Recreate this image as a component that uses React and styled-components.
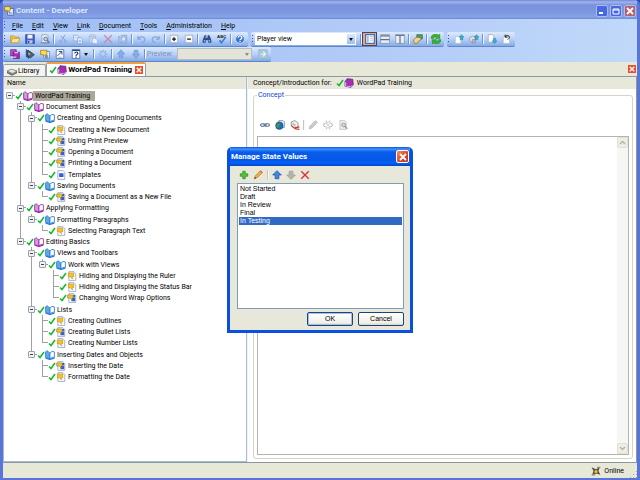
import React, { useState } from 'react';
import styled, { createGlobalStyle, css } from 'styled-components';

const GlobalStyle = createGlobalStyle`
  * {
    box-sizing: border-box;
  }
  body {
    margin: 0;
    background: #1c50b4;
    color: #000;
    font: 7px/10px Roboto, 'Liberation Sans', sans-serif;
  }
  button, input, select, textarea {
    font: inherit;
    color: inherit;
    margin: 0;
  }
  ul {
    margin: 0;
    padding: 0;
    list-style: none;
  }
`;

const page = <path d="M3 1h8l3 3v11H3z" fill="#fff" stroke="#6f86b4" />;

const shapes = {
  app: (
    <>
      <path d="M6 4h9v11H6z" fill="#eef4ff" stroke="#24458c" />
      <path d="M8 11h5M8 13h5" stroke="#3f6fd0" />
      <path d="M1 1h9v6H8l1 4-4-4H1z" fill="#ffe25a" stroke="#7b6a10" />
    </>
  ),
  open: (
    <>
      <path d="M1 14V3h5l2 2h6v3" fill="#f3c64b" stroke="#b98918" />
      <path d="M1 14l3-7h12l-3 7z" fill="#ffe391" stroke="#b98918" />
    </>
  ),
  save: (
    <>
      <path d="M1 1h14v14H1z" fill="#4a5fc4" stroke="#24348c" />
      <path d="M4 1h8v6H4z" fill="#eaf1ff" />
      <path d="M4 10h8v5H4z" fill="#b9c7ee" />
      <path d="M5 11h2v3H5z" fill="#24348c" />
    </>
  ),
  preview: (
    <>
      <path d="M3 1h8l2 2v11H3z" fill="#e4ebf7" stroke="#8090b0" />
      <path d="M1 14h14" stroke="#8090b0" strokeWidth="2" />
      <circle cx="9" cy="8" r="3" fill="#c4d2ea" stroke="#66758f" strokeWidth="1.5" />
      <path d="M11 10l4 4" stroke="#66758f" strokeWidth="2" />
    </>
  ),
  cut: (
    <g fill="none" stroke="#8ba6d6" strokeWidth="1.6">
      <path d="M11 1L6 11M4 3l8 7" />
      <circle cx="4" cy="12" r="2" />
      <circle cx="12" cy="12" r="2" />
    </g>
  ),
  copy: (
    <g fill="#eaf1fd" stroke="#7694cc">
      <path d="M1 2h6l2 2v7H1z" />
      <path d="M7 6h6l2 2v7H7z" />
      <path d="M9 10h4M9 12h4M3 6h3" />
    </g>
  ),
  paste: (
    <g stroke="#98aed6">
      <path d="M2 3h10v11H2z" fill="#c2d2ee" />
      <path d="M5 1h4v3H5z" fill="#e2eafa" />
      <path d="M7 7h6l2 2v6H7z" fill="#eaf1fd" />
    </g>
  ),
  remove: <path d="M2 2l12 12M14 2L2 14" stroke="#c987a8" strokeWidth="2" />,
  camera: (
    <>
      <path d="M1 4h3l2-2h8v12H1z" fill="#b4c6e8" stroke="#7f99cb" />
      <circle cx="9" cy="8" r="3.5" fill="#dde7f8" stroke="#7f99cb" />
      <path d="M3 11l3 3" stroke="#7f99cb" />
    </>
  ),
  undo: <path d="M3 3v5h5M3 8c3-5 11-4 11 1 0 2-2 4-5 4" fill="none" stroke="#88a9dd" strokeWidth="2" />,
  redo: <path d="M13 3v5H8M13 8C10 3 2 4 2 9c0 2 2 4 5 4" fill="none" stroke="#88a9dd" strokeWidth="2" />,
  expand: (
    <>
      <path d="M2 2h12v12H2z" fill="#fafafa" stroke="#8d97a8" />
      <path d="M5 8h6M8 5v6" stroke="#111" strokeWidth="2" />
    </>
  ),
  collapse: (
    <>
      <path d="M2 2h12v12H2z" fill="#fafafa" stroke="#8d97a8" />
      <path d="M5 8h6" stroke="#111" strokeWidth="2" />
    </>
  ),
  find: (
    <>
      <path d="M4 2h3v4h2V2h3l3 8v4h-5v-4H6v4H1v-4z" fill="#2d4b8e" />
      <path d="M3 10h2v2H3zM11 10h2v2h-2zM5 4h1v2H5z" fill="#c9d8f4" />
    </>
  ),
  spell: (
    <>
      <text x="0" y="7" fontSize="7" fontWeight="700" fontFamily="Liberation Sans, sans-serif" fill="#222">
        ABC
      </text>
      <path d="M4 10l3 4 7-9" fill="none" stroke="#3e78c8" strokeWidth="2.5" />
    </>
  ),
  help: (
    <>
      <circle cx="8" cy="8" r="7" fill="#3a72cf" stroke="#e6f0ff" />
      <path d="M5 6c0-4 6-4 6 0 0 2-3 2-3 4M8 11v2" fill="none" stroke="#fff" strokeWidth="2" />
    </>
  ),
  layoutLeft: (
    <>
      <path d="M1 1h14v14H1z" fill="#fff" stroke="#4870bc" strokeWidth="2" />
      <path d="M3 3h3v10H3z" fill="#9bbbe8" />
      <path d="M8 4h5M8 7h5M8 10h5" stroke="#7fa3dc" />
    </>
  ),
  layoutRows: (
    <>
      <path d="M1 1h14v14H1z" fill="#e9eef6" stroke="#7c8798" />
      <path d="M1 3h14M1 9h14" stroke="#5f6f8c" strokeWidth="2" />
    </>
  ),
  layoutColumns: (
    <>
      <path d="M1 1h14v14H1z" fill="#e9eef6" stroke="#7c8798" />
      <path d="M8 2v13M1 2h14" stroke="#6b778c" strokeWidth="2" />
    </>
  ),
  properties: (
    <>
      <path d="M6 1h9v7H6z" fill="#4e9c5e" stroke="#38607a" />
      <path d="M1 9l5-4 6 1 1 3-4 2-2 4H2z" fill="#f2d488" stroke="#8b6418" />
    </>
  ),
  refresh: (
    <g fill="#35b82c" stroke="#14701a" strokeWidth=".7">
      <path d="M0 7c0-7 9-8 12-5l2-2v7H7l2-2C7 4 4 5 4 7z" />
      <path d="M16 9c0 7-9 8-12 5l-2 2V9h7l-2 2c2 1 5 0 5-2z" />
    </g>
  ),
  pageUp: (
    <>
      <path d="M2 4h7l2 2v9H2z" fill="#fff" stroke="#a6b2c6" />
      <path d="M12 1l4 4h-2v4h-4V5H8z" fill="#3baed0" stroke="#1c7899" strokeWidth=".7" />
    </>
  ),
  pagesUp: (
    <>
      <path d="M1 6l5-3 4 3v5l-4 3-5-3z" fill="#e1e4ea" stroke="#848b98" />
      <path d="M5 9h5v5H5z" fill="#b9bec8" stroke="#777f8e" />
      <path d="M12 1l4 4h-2v4h-4V5H8z" fill="#3baed0" stroke="#1c7899" strokeWidth=".7" />
    </>
  ),
  pageDown: (
    <>
      <path d="M2 1h7l2 2v10H2z" fill="#fff" stroke="#8d9ab0" />
      <path d="M12 15l4-4h-2V7h-4v4H8z" fill="#3baed0" stroke="#1c7899" strokeWidth=".7" />
    </>
  ),
  pageUndo: (
    <>
      <path d="M2 4h10v11H2z" fill="#fff" stroke="#a6b2c6" />
      <path d="M5 5c2-5 9-2 6 2L9 9M5 1v4h4" fill="none" stroke="#222" strokeWidth="1.6" />
    </>
  ),
  newBook: (
    <>
      <path d="M1 1h9v10H1z" fill="#c04fce" stroke="#5a1169" />
      <path d="M5 5h10v10H5z" fill="#a32fb4" stroke="#4b0c58" />
      <path d="M7 6h6M2 13h8" stroke="#fff" strokeWidth="1.5" />
    </>
  ),
  newSection: (
    <>
      <path d="M2 1l8 5-4 9-4-3z" fill="#2b5fc4" stroke="#10306e" />
      <path d="M5 2l10 7-6 5-5-3z" fill="#4c6478" stroke="#1b2a38" />
      <path d="M5 5l4 3-3 2z" fill="#f2c230" />
    </>
  ),
  newTopic: (
    <>
      <path d="M6 4h9v11H6z" fill="#f6f9ff" stroke="#3560ac" />
      <path d="M8 11h5M8 13h5" stroke="#3560ac" strokeWidth="1.5" />
      <path d="M1 2h10v7H9l1 4-5-4H1z" fill="#f7dc58" stroke="#8a6a10" />
    </>
  ),
  linkPage: (
    <>
      <path d="M2 1h12v14H2z" fill="#fff" stroke="#24458c" />
      <path d="M4 11l7-7M11 4v5M11 4H6" stroke="#24458c" strokeWidth="1.5" />
      <path d="M5 13h6" stroke="#7a94cc" />
    </>
  ),
  questionPage: (
    <>
      <path d="M2 1h12v14H2z" fill="#fff" stroke="#24458c" />
      <path d="M2 2h12" stroke="#24458c" strokeWidth="2" />
      <path d="M6 7c0-3 5-3 5 0 0 2-3 2-3 4M8 12v2" fill="none" stroke="#1b2e66" strokeWidth="1.8" />
    </>
  ),
  star: <path d="M8 1v4M8 11v4M1 8h4M11 8h4M3 3l3 3M10 10l3 3M13 3l-3 3M6 10l-3 3" stroke="#8baee2" strokeWidth="2" />,
  upFaded: <path d="M8 1l6 7h-3v6H5V8H2z" fill="#86ace6" stroke="#6c95d8" />,
  downFaded: <path d="M8 15l6-7h-3V2H5v6H2z" fill="#86ace6" stroke="#6c95d8" />,
  go: (
    <>
      <path d="M1 1h14v14H1z" fill="#a8c5d8" stroke="#9ab6d0" />
      <path d="M4 8h7M8 4l4 4-4 4" fill="none" stroke="#e4eef4" strokeWidth="2" />
    </>
  ),
  library: (
    <>
      <path d="M0 8l7-3 9 3-7 4z" fill="#e8e8e8" stroke="#555" />
      <path d="M0 9v2l8 4 8-4V9l-7 4z" fill="#777" stroke="#444" strokeWidth=".6" />
    </>
  ),
  check: <path d="M2 9l4 4 8-11" fill="none" stroke="#12b82c" strokeWidth="3" />,
  book: (
    <>
      <path d="M2 5l3-4 9 1 1 9-4 4-9-2z" fill="#a32fb4" stroke="#560e66" />
      <path d="M1 6l3 1-1 7-2-1z" fill="#e9c8ee" stroke="#7a3a88" strokeWidth=".6" />
      <path d="M4 13l7 1 3-3" stroke="#fff" fill="none" />
    </>
  ),
  openBook: (
    <g fill="#fff" stroke="#9a2ea8" strokeWidth="1.4">
      <path d="M8 5L3 1 1 3v9l7 3z" fill="#d49adb" />
      <path d="M8 5c2-3 4-3 7-2v9c-3-1-5 0-7 3z" />
      <path d="M1 13l7 2 7-2" fill="none" strokeWidth="2" />
    </g>
  ),
  openSection: (
    <g fill="#fff" stroke="#2a7fd0" strokeWidth="1.4">
      <path d="M8 5L3 1 1 3v9l7 3z" fill="#5fa8ee" />
      <path d="M8 5c2-3 4-3 7-2v9c-3-1-5 0-7 3z" />
      <path d="M1 13l7 2 7-2" fill="none" strokeWidth="2" />
    </g>
  ),
  topic: (
    <>
      {page}
      <path d="M2 3h9v6H8l1 4-4-4H2z" fill="#f2c230" stroke="#b8860f" strokeWidth=".8" />
    </>
  ),
  recorded: (
    <>
      {page}
      <path d="M9 3h4v4H9zM7 8h6v5H7z" fill="#2f5fd8" />
      <path d="M1 3h9v5H8l1 4-4-4H1z" fill="#f2c230" stroke="#8f6a14" strokeWidth=".8" />
    </>
  ),
  template: (
    <>
      {page}
      <path d="M5 5h7v6H5z" fill="#2f5fd8" />
    </>
  ),
  link: (
    <g fill="none" stroke="#5c7290" strokeWidth="1.8">
      <rect x="1" y="6" width="7" height="4" rx="2" />
      <rect x="8" y="6" width="7" height="4" rx="2" />
      <path d="M5 8h6" />
    </g>
  ),
  webLink: (
    <>
      <path d="M6 1h7l2 2v9H6z" fill="#eaf1fc" stroke="#4b69a4" />
      <circle cx="7" cy="9" r="6" fill="#226cc0" stroke="#164a70" />
      <path d="M3 6l4-1 2 3-3 2-1 4-3-4z" fill="#3c9a4a" />
    </>
  ),
  removeLink: (
    <>
      <path d="M2 3l6-2 5 4v6l-6 2-5-4z" fill="#f2f2f2" stroke="#666" />
      <path d="M4 5l5 3M4 7l5 3" stroke="#888" />
      <path d="M2 9l5 4 8-2M8 14l7 1" fill="none" stroke="#d0341c" strokeWidth="2" />
    </>
  ),
  pencilFaded: <path d="M2 14l1-4 9-9 3 3-9 9z" fill="#ccc" stroke="#aaa" />,
  unlinkFaded: (
    <path
      d="M7 5H4a3 3 0 0 0 0 6h2M10 5h2a3 3 0 0 1 0 6H9M5 1l2 3M11 1L9 4M5 15l2-3M11 15l-2-3M6 8h4"
      fill="none"
      stroke="#b4b4b4"
      strokeWidth="1.6"
    />
  ),
  searchFaded: (
    <>
      <path d="M3 1h8l2 2v12H3z" fill="#eee" stroke="#b0b0b0" />
      <circle cx="9" cy="8" r="3" fill="#ddd" stroke="#999" strokeWidth="1.5" />
      <path d="M11 10l4 4" stroke="#999" strokeWidth="2" />
    </>
  ),
  add: <path d="M6 2h4v4h4v4h-4v4H6v-4H2V6h4z" fill="#4cc83c" stroke="#1d7c18" />,
  edit: (
    <>
      <path d="M2 14l2-5 8-8 3 3-8 8z" fill="#f0b43c" stroke="#a56a12" />
      <path d="M11 2l2-1 2 2-1 2z" fill="#d8607a" />
      <path d="M2 14l1-3 2 2z" fill="#333" />
    </>
  ),
  up: <path d="M8 1l7 7h-4v6H5V8H1z" fill="#3f86ea" stroke="#16419c" />,
  down: <path d="M8 15l7-7h-4V2H5v6H1z" fill="#b4b4ac" stroke="#96968e" />,
  cross: <path d="M2 2l12 12M14 2L2 14" stroke="#dc2f3c" strokeWidth="2.2" />,
  online: (
    <>
      <path d="M1 2l7 3 6-3-2 6 3 6-7-2-6 2 2-6z" fill="#4a5058" />
      <circle cx="8" cy="9" r="3" fill="#f0c020" stroke="#806000" />
      <path d="M1 13h6v2H1zM10 1h5v2h-5z" fill="#888" />
    </>
  ),
};

const Svg = styled.svg`
  display: block;
  flex: none;
`;

const Icon = ({ name, size = 10 }) => (
  <Svg width={size} height={size} viewBox="0 0 16 16" aria-hidden="true">
    {shapes[name]}
  </Svg>
);

const Window = styled.div`
  display: flex;
  flex-direction: column;
  min-height: 100vh;
  border: solid #5a74d8;
  border-width: 0 3px 2px;
  border-radius: 5px 5px 0 0;
  background: #e8e8d9;
  overflow: hidden;
`;

const TitleBar = styled.header`
  display: flex;
  align-items: center;
  gap: 2px;
  height: 19px;
  padding: 2px 0 0 1px;
  background: linear-gradient(#6f86d8, #9fb5ec 2px, #7b92dc 5px, #7e98e0 13px, #86a4e8 17px, #6c86d6);
`;

const WindowTitle = styled.h1`
  flex: 1;
  margin: 0;
  color: #dbe6fb;
  font: bold 8px/12px Roboto, sans-serif;
`;

const CaptionButton = styled.button`
  display: flex;
  align-items: center;
  justify-content: center;
  width: 12px;
  height: 12px;
  padding: 0;
  border: 1px solid #a9bcf0;
  border-radius: 2px;
  color: #fff;
  background: ${({ $close }) => ($close ? '#b4606e' : '#4668e0')};
`;

const CaptionButtons = styled.div`
  display: flex;
  gap: 2px;
  padding-right: 1px;
`;

const Bars = styled.div`
  background: linear-gradient(to right, #9ebef5, #b3cbf7 60%, #c0d9f9);
`;

const MenuBar = styled.nav`
  display: flex;
  align-items: center;
  height: 13px;
`;

const Grip = styled.span`
  flex: none;
  width: 2px;
  height: 9px;
  margin: 0 1px;
  background: repeating-linear-gradient(#3d5c9f 0 1px, transparent 1px 3px) 0 0 / 1px 100% no-repeat;
`;

const MenuItem = styled.button`
  padding: 0;
  margin: 0 4px 0 5px;
  border: 0;
  background: none;

  &::first-letter {
    text-decoration: underline;
  }
`;

const ToolbarRow = styled.div`
  display: flex;
  gap: 3px;
  height: 15px;
`;

const Toolbar = styled.div`
  display: flex;
  align-items: center;
  height: 15px;
  padding-right: 1px;
  border-bottom: 1px solid #5f86c8;
  border-radius: 2px;
  background: linear-gradient(#dceafe, #b8d1f8 50%, #83abe6);
`;

const ToolButton = styled.button`
  display: flex;
  align-items: center;
  justify-content: center;
  gap: 3px;
  width: ${({ $wide }) => ($wide ? '25px' : '15px')};
  height: 14px;
  padding: 0;
  border: 1px solid transparent;
  background: none;

  ${({ $active }) =>
    $active &&
    css`
      border-color: #2c4a94;
      background: #f5a45a;
    `}
`;

const Divider = styled.span`
  flex: none;
  width: 1px;
  height: 10px;
  margin: 0 1px;
  background: ${({ $tone }) => $tone || '#6f93d0'};
  box-shadow: 1px 0 #f2f7ff;
`;

const Caret = styled.span`
  flex: none;
  border: 2px solid transparent;
  border-top: 3px solid ${({ $muted }) => ($muted ? '#8c8c84' : '#111')};
  border-bottom: 0;
`;

const Combo = styled.label`
  display: flex;
  align-items: center;
  width: ${({ $width }) => $width};
  height: 12px;
  margin: 0 3px 0 0;
  border: 1px solid ${({ $muted }) => ($muted ? '#b6bdc0' : '#fff')};
  background: ${({ $muted }) => ($muted ? '#e4e3d8' : '#fff')};
`;

const ComboSelect = styled.select`
  flex: 1;
  min-width: 0;
  height: 10px;
  padding: 0 1px;
  border: 0;
  appearance: none;
  background: none;
`;

const ComboArrow = styled.span`
  display: flex;
  align-items: center;
  justify-content: center;
  width: 8px;
  height: 10px;
  background: ${({ $muted }) => ($muted ? 'none' : 'linear-gradient(#dceafe, #9cbdf0)')};
`;

const PreviewLabel = styled.label`
  width: 31px;
  padding-left: 1px;
  color: #8590a8;
`;

const TabStrip = styled.div`
  display: flex;
  align-items: flex-end;
  height: 14px;
  padding: 0 1px 0 0;
`;

const Tab = styled.button`
  display: flex;
  align-items: center;
  height: ${({ $active }) => ($active ? '14px' : '12px')};
  padding: ${({ $active }) => ($active ? '0 2px' : '0 3px')};
  border: 1px solid #9aa2a8;
  border-bottom: 0;
  border-radius: 2px 2px 0 0;
  background: #f4f4ee;

  ${({ $active }) =>
    $active &&
    css`
      border-top: 2px solid #f0a040;
      background: #fff;
      font: bold 8px/10px Roboto, sans-serif;
    `}
`;

const TabText = styled.span`
  padding: 0 3px 0 1px;
`;

const RedClose = styled.span`
  display: flex;
  align-items: center;
  justify-content: center;
  width: 8px;
  height: 8px;
  padding: 0;
  border: 0;
  color: #fff;
  background: #e4502c;
`;

const TabSpacer = styled.span`
  flex: 1;
`;

const StripClose = styled(RedClose).attrs({ as: 'button' })`
  margin-bottom: 3px;
`;

const Panes = styled.main`
  display: grid;
  grid-template-columns: 244px 1fr;
  gap: 1px;
  flex: 1;
  border: solid #8b9a9e;
  border-width: 1px 1px 1px 0;
  background: #f4f2ec;
`;

const TreePane = styled.section`
  border: solid #a4bbdc;
  border-width: 0 1px 1px;
  background: #fff;
`;

const ColumnHeading = styled.h2`
  margin: 0;
  padding: 1px 3px 0;
  height: 12px;
  background: #e8e8da;
  font: inherit;
`;

const Tree = styled.ul`
  padding-top: 1px;
`;

const TreeRow = styled.li`
  display: flex;
  align-items: center;
  height: 11px;
  white-space: nowrap;

  &:nth-child(4n + 3) {
    height: 12px;
  }
`;

const across = 'linear-gradient(#a0a0a0, #a0a0a0) 5px 5px / 6px 1px no-repeat';
const above = 'linear-gradient(#a0a0a0, #a0a0a0) 5px 0 / 1px 6px no-repeat';
const below = 'linear-gradient(#a0a0a0, #a0a0a0) 5px 5px / 1px 7px no-repeat';

const Guide = styled.span`
  display: flex;
  align-items: center;
  justify-content: center;
  flex: none;
  width: 11px;
  height: 100%;
  background: ${({ $across, $above, $below }) =>
    [$across && across, $above && above, $below && below].filter(Boolean).join(', ') || 'none'};
`;

const Toggle = styled.button`
  width: 7px;
  height: 7px;
  padding: 0;
  border: 1px solid #92a2b8;
  border-radius: 1px;
  background: linear-gradient(#444, #444) center / 3px 1px no-repeat #f4f2ec;
`;

const NodeText = styled.span`
  padding: 0 5px 0 2px;
  background: ${({ $selected }) => ($selected ? '#aca899' : 'none')};
`;

const DetailPane = styled.section`
  display: flex;
  flex-direction: column;
  background: #fff;
`;

const DetailHeading = styled.h2`
  display: flex;
  align-items: center;
  height: 12px;
  margin: 0;
  padding: 0 5px;
  background: #e8e8da;
  font: inherit;
`;

const HeadingLabel = styled.span`
  margin-right: 4px;
`;

const HeadingTopic = styled.span`
  margin-left: 3px;
`;

const ConceptBox = styled.fieldset`
  display: flex;
  flex-direction: column;
  flex: 1;
  min-width: 0;
  margin: 1px 3px 3px 5px;
  padding: 17px 3px 3px;
  border: 1px solid #d6d4c6;
  border-radius: 3px;
`;

const Legend = styled.legend`
  margin-left: 0;
  padding: 0 1px;
  color: #0a46d5;
`;

const ConceptTools = styled.div`
  display: flex;
  align-items: center;
  height: 15px;
  margin-bottom: 4px;
`;

const Editor = styled.div`
  display: flex;
  flex: 1;
  border: 1px solid #b4b4a8;
`;

const EditorText = styled.textarea`
  flex: 1;
  min-width: 0;
  border: 0;
  outline: 0;
  resize: none;
`;

const ScrollTrack = styled.div`
  display: flex;
  flex-direction: column;
  justify-content: space-between;
  width: 11px;
  background: #f7f6f4;
`;

const ScrollButton = styled.button`
  display: flex;
  align-items: center;
  justify-content: center;
  height: 11px;
  padding: 0;
  border: 1px solid #e2e0d4;
  border-radius: 2px;
  background: #eeede6;
  color: #b8b6a8;
`;

const StatusBar = styled.footer`
  display: flex;
  align-items: center;
  justify-content: flex-end;
  gap: 3px;
  height: 15px;
`;

const SizeGrip = styled.span`
  align-self: flex-end;
  width: 8px;
  height: 8px;
  margin-left: 2px;
  background: radial-gradient(#a8a89a 1px, transparent 1px) 0 0 / 3px 3px;
  clip-path: polygon(100% 0, 100% 100%, 0 100%);
`;

const DialogLayer = styled.div`
  position: fixed;
  inset: 0;
  display: grid;
  place-items: center;
`;

const Dialog = styled.div`
  width: 186px;
  border: 3px solid #0a4fe0;
  border-top: 0;
  border-radius: 5px 5px 0 0;
  background: #e8e8da;
  overflow: hidden;
`;

const DialogTitle = styled.div`
  display: flex;
  align-items: center;
  justify-content: space-between;
  height: 19px;
  padding: 0 1px;
  color: #fff;
  background: linear-gradient(#0a50d8, #3e94ff 2px, #0a5cec 5px, #0458e8 13px, #0660f8 16px, #0344c4);
  font: bold 8px/12px Roboto, sans-serif;
`;

const DialogClose = styled.button`
  display: flex;
  align-items: center;
  justify-content: center;
  width: 13px;
  height: 13px;
  padding: 0;
  border: 1px solid #fff;
  border-radius: 2px;
  color: #fff;
  background: linear-gradient(135deg, #f09070, #dc4420 60%, #c03818);
`;

const DialogBody = styled.form`
  padding: 1px 6px 4px 7px;
`;

const DialogTools = styled.div`
  display: flex;
  align-items: center;
  height: 16px;

  ${ToolButton} {
    width: 14px;
  }
  ${Divider} {
    margin: 0 2px;
  }
`;

const StateList = styled.select`
  display: block;
  width: 100%;
  height: 126px;
  padding: 1px;
  border: 1px solid #7f9db9;
  border-radius: 0;
  outline: 0;
  background: #fff;
  font: 7px/8px 'Liberation Sans', sans-serif;
  overflow: hidden;
`;

const StateOption = styled.option`
  height: 8px;
  min-height: 8px;
  padding: 0 1px;

  &:checked {
    background: linear-gradient(#316ac5, #316ac5);
    color: #fff;
    -webkit-text-fill-color: #fff;
  }
`;

const DialogButtons = styled.div`
  display: flex;
  justify-content: flex-end;
  gap: 5px;
  padding-top: 3px;
`;

const PushButton = styled.button`
  width: 46px;
  height: 14px;
  padding: 0;
  border: 1px solid #1c4478;
  border-radius: 2px;
  background: linear-gradient(#fff, #f0efe8 80%, #dad6c8);
  box-shadow: ${({ $primary }) => ($primary ? 'inset 0 0 0 1px #a4c0ee' : 'none')};
  font: 7px/8px 'Liberation Sans', sans-serif;
`;

const menus = ['File', 'Edit', 'View', 'Link', 'Document', 'Tools', 'Administration', 'Help'];

const mainTools = [
  'open', 'save', 'preview', '|',
  'cut', 'copy', 'paste', 'remove', 'camera', '|',
  'undo', 'redo', '|',
  'expand', 'collapse', '|',
  'find', 'spell', '|',
  'help',
];
const viewTools = ['|', 'layoutLeft', 'layoutRows', 'layoutColumns', '|', 'properties', '|', 'refresh'];
const checkTools = ['pageUp', 'pagesUp', '|', 'pageDown', 'pageUndo'];
const topicTools = ['newBook', 'newSection', 'newTopic', 'linkPage'];
const orderTools = ['|', 'star', '|', 'upFaded', 'downFaded', '|'];

const outline = {
  text: 'WordPad Training',
  icon: 'openBook',
  items: [
    {
      text: 'Document Basics',
      icon: 'openBook',
      items: [
        {
          text: 'Creating and Opening Documents',
          icon: 'openSection',
          items: [
            { text: 'Creating a New Document', icon: 'topic' },
            { text: 'Using Print Preview', icon: 'recorded' },
            { text: 'Opening a Document', icon: 'recorded' },
            { text: 'Printing a Document', icon: 'recorded' },
            { text: 'Templates', icon: 'template' },
          ],
        },
        {
          text: 'Saving Documents',
          icon: 'openSection',
          items: [{ text: 'Saving a Document as a New File', icon: 'recorded' }],
        },
      ],
    },
    {
      text: 'Applying Formatting',
      icon: 'openBook',
      items: [
        {
          text: 'Formatting Paragraphs',
          icon: 'openSection',
          items: [{ text: 'Selecting Paragraph Text', icon: 'topic' }],
        },
      ],
    },
    {
      text: 'Editing Basics',
      icon: 'openBook',
      items: [
        {
          text: 'Views and Toolbars',
          icon: 'openSection',
          items: [
            {
              text: 'Work with Views',
              icon: 'openSection',
              items: [
                { text: 'Hiding and Displaying the Ruler', icon: 'topic' },
                { text: 'Hiding and Displaying the Status Bar', icon: 'topic' },
                { text: 'Changing Word Wrap Options', icon: 'recorded' },
              ],
            },
          ],
        },
        {
          text: 'Lists',
          icon: 'openSection',
          items: [
            { text: 'Creating Outlines', icon: 'topic' },
            { text: 'Creating Bullet Lists', icon: 'recorded' },
            { text: 'Creating Number Lists', icon: 'topic' },
          ],
        },
        {
          text: 'Inserting Dates and Objects',
          icon: 'openSection',
          items: [
            { text: 'Inserting the Date', icon: 'recorded' },
            { text: 'Formatting the Date', icon: 'topic' },
          ],
        },
      ],
    },
  ],
};

// each row carries the vertical lines of its ancestors that still have siblings below
const flatten = (node, closed, lines = [], last = true) => [
  { node, lines, last },
  ...(closed.includes(node.text) ? [] : node.items || []).flatMap((child, i, all) =>
    flatten(child, closed, [...lines, !last], i === all.length - 1)
  ),
];

const Cross = ({ size = 6 }) => (
  <Svg width={size} height={size} viewBox="0 0 8 8" aria-hidden="true">
    <path d="M1 1l6 6M7 1L1 7" stroke="currentColor" strokeWidth="1.8" />
  </Svg>
);

const Tools = ({ names, active, tone }) =>
  names.map((name, i) =>
    name === '|' ? (
      <Divider key={i.toString()} $tone={tone} />
    ) : (
      <ToolButton key={i.toString()} type="button" aria-label={name} $active={name === active}>
        <Icon name={name} />
      </ToolButton>
    )
  );

const OutlineTree = () => {
  const [closed, setClosed] = useState([]);
  const toggle = (text) =>
    setClosed(closed.includes(text) ? closed.filter((item) => item !== text) : [...closed, text]);

  return (
    <Tree role="tree">
      {flatten(outline, closed).map(({ node, lines, last }) => (
        <TreeRow key={node.text} role="treeitem">
          {lines.map((line, i) => (
            <Guide key={i.toString()} $above={line} $below={line} />
          ))}
          <Guide $across $above={lines.length > 0} $below={!last}>
            {node.items && <Toggle type="button" aria-label={node.text} onClick={() => toggle(node.text)} />}
          </Guide>
          <Icon name="check" size={8} />
          <Icon name={node.icon} />
          <NodeText $selected={node === outline}>{node.text}</NodeText>
        </TreeRow>
      ))}
    </Tree>
  );
};

const ManageStates = () => (
  <DialogLayer>
    <Dialog role="dialog" aria-labelledby="states-title">
      <DialogTitle>
        <span id="states-title">Manage State Values</span>
        <DialogClose type="button" aria-label="Close">
          <Cross size={8} />
        </DialogClose>
      </DialogTitle>
      <DialogBody onSubmit={(e) => e.preventDefault()}>
        <DialogTools>
          <Tools names={['add', 'edit', '|', 'up', 'down', 'cross']} tone="#c8c6b4" />
        </DialogTools>
        <StateList size="5" aria-labelledby="states-title" defaultValue="In Testing">
          {['Not Started', 'Draft', 'In Review', 'Final', 'In Testing'].map((state) => (
            <StateOption key={state}>{state}</StateOption>
          ))}
        </StateList>
        <DialogButtons>
          <PushButton $primary type="submit">
            OK
          </PushButton>
          <PushButton type="button">Cancel</PushButton>
        </DialogButtons>
      </DialogBody>
    </Dialog>
  </DialogLayer>
);

const App = () => (
  <>
    <GlobalStyle />
    <Window>
      <TitleBar>
        <Icon name="app" />
        <WindowTitle>Content - Developer</WindowTitle>
        <CaptionButtons>
          <CaptionButton type="button" aria-label="Minimize">
            <Svg width="8" height="8" viewBox="0 0 8 8">
              <path d="M1 6h4" stroke="#fff" strokeWidth="2" />
            </Svg>
          </CaptionButton>
          <CaptionButton type="button" aria-label="Maximize">
            <Svg width="8" height="8" viewBox="0 0 8 8">
              <path d="M1 2h6v5H1zM1 3h6" fill="none" stroke="#fff" />
            </Svg>
          </CaptionButton>
          <CaptionButton $close type="button" aria-label="Close">
            <Cross size={8} />
          </CaptionButton>
        </CaptionButtons>
      </TitleBar>

      <Bars>
        <MenuBar>
          <Grip />
          {menus.map((menu) => (
            <MenuItem key={menu} type="button">
              {menu}
            </MenuItem>
          ))}
        </MenuBar>
        <ToolbarRow>
          <Toolbar>
            <Grip />
            <Tools names={mainTools} />
          </Toolbar>
          <Toolbar>
            <Grip />
            <Combo $width="101px">
              <ComboSelect aria-label="View" defaultValue="Player view">
                <option>Player view</option>
              </ComboSelect>
              <ComboArrow>
                <Caret />
              </ComboArrow>
            </Combo>
            <Tools names={viewTools} active="layoutLeft" />
          </Toolbar>
          <Toolbar>
            <Grip />
            <Tools names={checkTools} />
          </Toolbar>
        </ToolbarRow>
        <ToolbarRow>
          <Toolbar>
            <Grip />
            <Tools names={topicTools} />
            <ToolButton $wide type="button" aria-label="New question">
              <Icon name="questionPage" />
              <Caret />
            </ToolButton>
            <Tools names={orderTools} />
            <PreviewLabel htmlFor="preview">Preview:</PreviewLabel>
            <Combo $muted $width="75px">
              <ComboSelect id="preview" disabled />
              <ComboArrow $muted>
                <Caret $muted />
              </ComboArrow>
            </Combo>
            <Tools names={['go']} />
          </Toolbar>
        </ToolbarRow>
      </Bars>

      <TabStrip>
        <Tab type="button">
          <Icon name="library" />
          <TabText>Library</TabText>
        </Tab>
        <Tab type="button" $active>
          <Icon name="check" size={8} />
          <Icon name="book" />
          <TabText>WordPad Training</TabText>
          <RedClose>
            <Cross />
          </RedClose>
        </Tab>
        <TabSpacer />
        <StripClose type="button" aria-label="Close tab">
          <Cross />
        </StripClose>
      </TabStrip>

      <Panes>
        <TreePane>
          <ColumnHeading>Name</ColumnHeading>
          <OutlineTree />
        </TreePane>
        <DetailPane>
          <DetailHeading>
            <HeadingLabel>Concept/Introduction for:</HeadingLabel>
            <Icon name="check" size={8} />
            <Icon name="book" />
            <HeadingTopic>WordPad Training</HeadingTopic>
          </DetailHeading>
          <ConceptBox>
            <Legend>Concept</Legend>
            <ConceptTools>
              <Tools
                names={['link', 'webLink', 'removeLink', '|', 'pencilFaded', 'unlinkFaded', 'searchFaded']}
                tone="#c8c6b4"
              />
            </ConceptTools>
            <Editor>
              <EditorText aria-label="Concept" />
              <ScrollTrack>
                <ScrollButton type="button" aria-label="Scroll up">
                  <Svg width="7" height="5" viewBox="0 0 14 10">
                    <path d="M2 8l5-5 5 5" fill="none" stroke="currentColor" strokeWidth="3" />
                  </Svg>
                </ScrollButton>
                <ScrollButton type="button" aria-label="Scroll down">
                  <Svg width="7" height="5" viewBox="0 0 14 10">
                    <path d="M2 2l5 5 5-5" fill="none" stroke="currentColor" strokeWidth="3" />
                  </Svg>
                </ScrollButton>
              </ScrollTrack>
            </Editor>
          </ConceptBox>
        </DetailPane>
      </Panes>

      <StatusBar>
        <Icon name="online" />
        <span>Online</span>
        <SizeGrip />
      </StatusBar>
    </Window>
    <ManageStates />
  </>
);

export default App;
